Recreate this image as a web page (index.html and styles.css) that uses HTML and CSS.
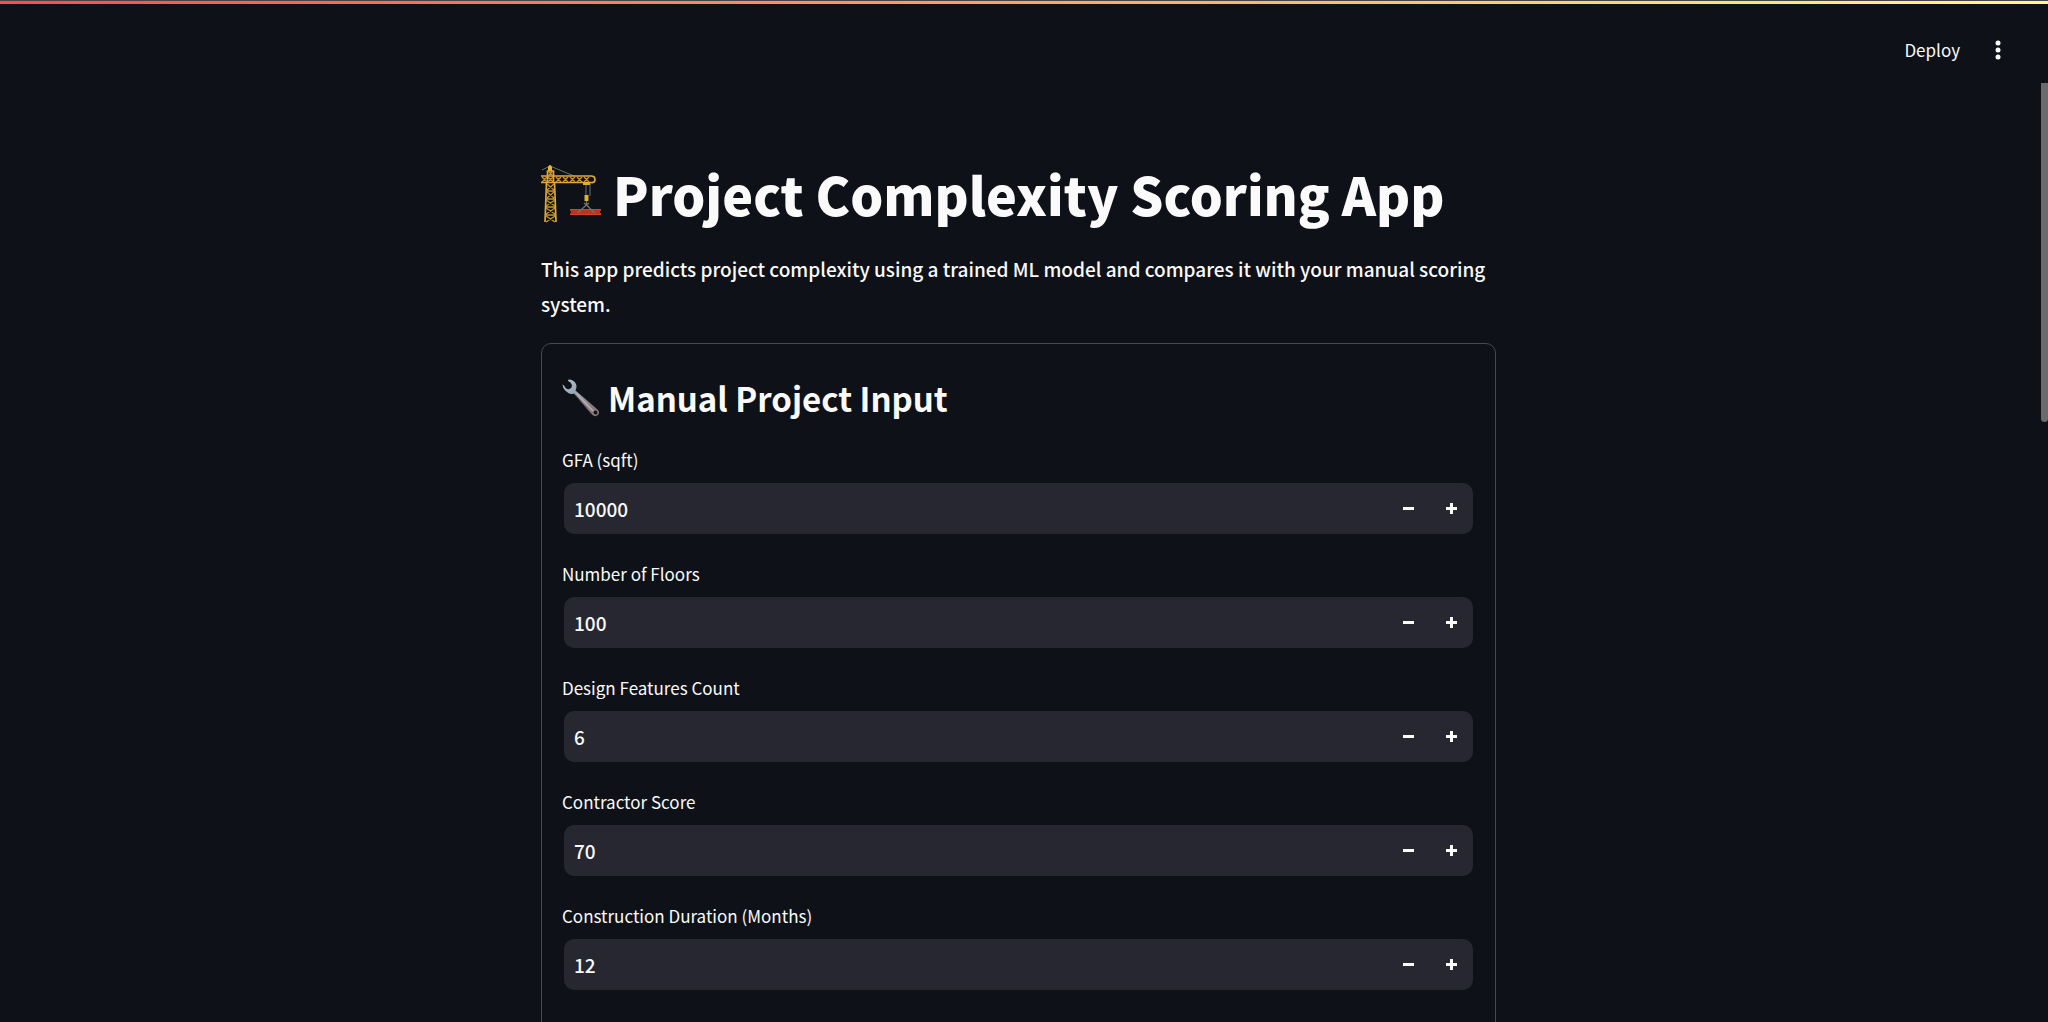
FILE: index.html
```html
<!DOCTYPE html>
<html lang="en">
<head>
<meta charset="utf-8">
<meta name="viewport" content="width=device-width, initial-scale=1">
<title>Project Complexity Scoring App</title>
<link rel="stylesheet" href="styles.css">
</head>
<body>
<div class="app">
  <div class="decoration"></div>
  <header class="toolbar">
    <button class="deploy" type="button">Deploy</button>
    <button class="menu" type="button" aria-label="Main menu">
      <svg width="6" height="20" viewBox="0 0 6 20" fill="currentColor"><circle cx="3" cy="3" r="2.5"/><circle cx="3" cy="10" r="2.5"/><circle cx="3" cy="17" r="2.5"/></svg>
    </button>
  </header>
  <main class="scroll-area">
    <div class="block">
      <h1 class="title">
        <svg class="crane" viewBox="0 0 60 60" fill="none" aria-hidden="true">
          <path d="M1 6 9 2l24 10M45 19v13M49 19v13" stroke="#777a7c" stroke-width=".9"/>
          <path d="M7 7V3q2-4 4 0v4z" fill="#e9b83b"/>
          <path d="M6.500 18V7h6v11M5.500 18 4 58M13.500 18 15 58M0 12h50q4 0 4 3.500T50 18.500H0" stroke="#dfaa35" stroke-width="1.700"/>
          <path d="M1 13l5 5m0-5-5 5M7 7l5 5m0-5-5 5M7 13l5 5m0-5-5 5M15 13l5 5m0-5-5 5M22 13l5 5m0-5-5 5M29 13l5 5m0-5-5 5M36 13l5 5m0-5-5 5M43 13l5 5m0-5-5 5M6 20l7 6m0-6-7 6M6 28l7 6m0-6-7 6M5 36l9 6m0-6-9 6M5 44l9 6m0-6-9 6M5 52l9 6m0-6-9 6M5 27h9M5 35h9M5 43h9M4 51h11" stroke="#c89430" stroke-width="1.400"/>
          <path d="M42 18h7v3h-7zM43.500 31h4v6h-4z" fill="#e0b02f"/>
          <path d="M29 45h31v1.500l-1 .5v1.500l1 .5V51H29v-1.500l1-.5v-1.500l-1-.5z" fill="#b9351c"/>
          <path d="M29 45.500h31M29 50.500h31" stroke="#cf4428"/>
          <path d="M45.500 37v4l-9 8M45.500 41l8 8M43 39l5 4M48 39l-5 4" stroke="#77736f" stroke-width="1.200"/>
        </svg>
        <span>Project Complexity Scoring App</span>
      </h1>
      <p class="intro">This app predicts project complexity using a trained ML model and compares it with your manual scoring system.</p>
      <form class="card">
        <h2 class="subtitle">
          <svg class="wrench" viewBox="0 0 38 38" aria-hidden="true">
            <defs>
              <linearGradient id="steel" x1="0" y1="0" x2="1" y2="1"><stop offset="0" stop-color="#b4c4d2"/><stop offset=".4" stop-color="#94a0ad"/><stop offset=".7" stop-color="#8b8288"/><stop offset="1" stop-color="#8a6f6d"/></linearGradient>
            </defs>
            <path d="M6.500 .5Q12 .5 14 5q1.200 3-.5 6.500L35.500 30.500q3 3 .5 5.500-3 2.500-6-.5L12 14.500Q8 16 5 13 1 10 .5 5.500L2 6.500Q4 11 7.500 10 11 8.500 9.500 5 8.500 3 6 2z" fill="url(#steel)"/>
            <path d="M14.500 14.500 31 32" stroke="#b5aeb5" stroke-width="1.500"/>
            <path d="M13 15.500 29.500 35" stroke="#5c4240"/>
            <circle cx="33.500" cy="33.500" r="1.900" fill="#14161b"/>
          </svg>
          <span>Manual Project Input</span>
        </h2>
        <div class="fields">
          <div class="field">
            <label for="gfa">GFA (sqft)</label>
            <div class="number"><input id="gfa" type="text" inputmode="numeric" value="10000"><button class="step minus" type="button" aria-label="Decrease"></button><button class="step plus" type="button" aria-label="Increase"></button></div>
          </div>
          <div class="field">
            <label for="floors">Number of Floors</label>
            <div class="number"><input id="floors" type="text" inputmode="numeric" value="100"><button class="step minus" type="button" aria-label="Decrease"></button><button class="step plus" type="button" aria-label="Increase"></button></div>
          </div>
          <div class="field">
            <label for="features">Design Features Count</label>
            <div class="number"><input id="features" type="text" inputmode="numeric" value="6"><button class="step minus" type="button" aria-label="Decrease"></button><button class="step plus" type="button" aria-label="Increase"></button></div>
          </div>
          <div class="field">
            <label for="contractor">Contractor Score</label>
            <div class="number"><input id="contractor" type="text" inputmode="numeric" value="70"><button class="step minus" type="button" aria-label="Decrease"></button><button class="step plus" type="button" aria-label="Increase"></button></div>
          </div>
          <div class="field">
            <label for="duration">Construction Duration (Months)</label>
            <div class="number"><input id="duration" type="text" inputmode="numeric" value="12"><button class="step minus" type="button" aria-label="Decrease"></button><button class="step plus" type="button" aria-label="Increase"></button></div>
          </div>
        </div>
      </form>
    </div>
    <div class="scroll-thumb"></div>
  </main>
</div>
</body>
</html>
```
FILE: styles.css
```css
* { box-sizing: border-box; }

body {
  margin: 0;
  background: #0e1117;
  color: #fafafa;
  font-family: "Noto Sans CJK SC", "Noto Sans", sans-serif;
  font-size: 19px;
  font-weight: 500;
}

button, input { font: inherit; color: inherit; background: none; border: 0; padding: 0; }

.app { display: flex; flex-direction: column; height: 100vh; overflow: hidden; }

.decoration {
  flex: none;
  height: 4px;
  border-top: 1px solid #46464b;
  background: linear-gradient(90deg, #ff4b4b, #fffd80);
}

.toolbar {
  flex: none;
  display: flex;
  justify-content: flex-end;
  align-items: center;
  gap: 35px;
  height: 79px;
  padding: 13px 47px 0 0;
}

.deploy { font-size: 17px; line-height: 24px; font-weight: 400; }
.menu { display: flex; }

.scroll-area { position: relative; flex: 1; min-height: 0; overflow: hidden; padding-right: 11px; }

.scroll-thumb {
  position: absolute;
  top: 0;
  right: 0;
  width: 7px;
  height: 339px;
  border-radius: 0 0 4px 4px;
  background: #6b6b6e;
}

.block { max-width: 955px; margin: 0 auto; padding-top: 75px; }

.title {
  display: flex;
  align-items: center;
  gap: 12px;
  margin: 0;
  font-size: 52px;
  line-height: 72px;
  font-weight: 900;
}

.crane { flex: none; width: 60px; height: 60px; }

.intro { margin: 21px 0 22px; line-height: 35px; }

.card { border: 1px solid #48494e; border-radius: 10px; padding: 30px 20px 64px; }

.subtitle {
  display: flex;
  align-items: center;
  gap: 8px;
  margin: 0 0 26px;
  font-size: 33px;
  line-height: 48px;
  font-weight: 700;
}

.wrench { flex: none; width: 38px; height: 38px; }

.fields { display: flex; flex-direction: column; gap: 28px; }
.field { display: flex; flex-direction: column; gap: 11px; }
.field label { font-size: 17px; line-height: 24px; font-weight: 400; }

.number {
  display: flex;
  height: 51px;
  margin: 0 2px;
  padding-left: 10px;
  border-radius: 10px;
  background: #262730;
}

.number input { flex: 1; min-width: 0; outline: 0; }

.step { width: 43px; background-repeat: no-repeat; background-position: center; }
.minus { background-image: linear-gradient(#fafafa, #fafafa); background-size: 11px 3px; }
.plus {
  background-image: linear-gradient(#fafafa, #fafafa), linear-gradient(#fafafa, #fafafa);
  background-size: 11px 3px, 3px 11px;
}
```
